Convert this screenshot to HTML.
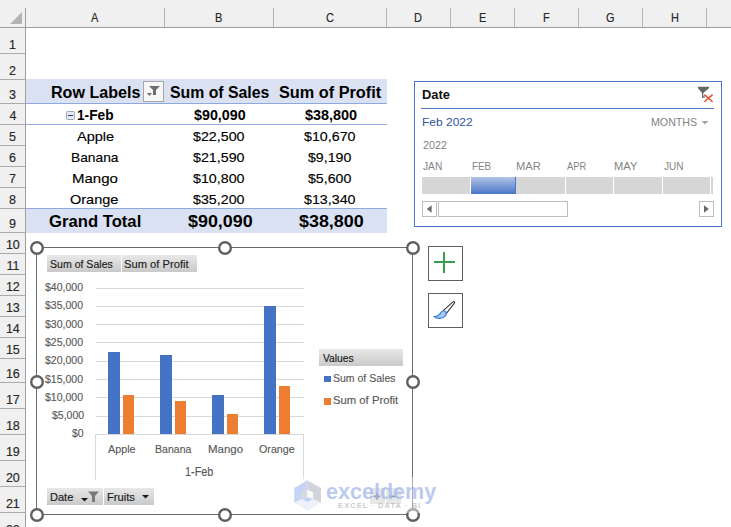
<!DOCTYPE html><html><head><meta charset="utf-8"><style>
html,body{margin:0;padding:0;}
body{width:731px;height:527px;overflow:hidden;position:relative;background:#fff;font-family:"Liberation Sans",sans-serif;}
.r{position:absolute;}
.t{position:absolute;white-space:pre;transform-origin:0 0;}
.n{-webkit-text-stroke:0.15px currentColor;}
</style></head><body>

<div class="r" style="left:0px;top:0px;width:731px;height:27px;background:#f0f0f0"></div>
<div class="r" style="left:0px;top:27px;width:731px;height:1px;background:#9e9e9e"></div>
<div class="r" style="left:164px;top:8px;width:1px;height:19px;background:#b4b4b4"></div>
<div class="r" style="left:273px;top:8px;width:1px;height:19px;background:#b4b4b4"></div>
<div class="r" style="left:386px;top:8px;width:1px;height:19px;background:#b4b4b4"></div>
<div class="r" style="left:450px;top:8px;width:1px;height:19px;background:#b4b4b4"></div>
<div class="r" style="left:514px;top:8px;width:1px;height:19px;background:#b4b4b4"></div>
<div class="r" style="left:578px;top:8px;width:1px;height:19px;background:#b4b4b4"></div>
<div class="r" style="left:642px;top:8px;width:1px;height:19px;background:#b4b4b4"></div>
<div class="r" style="left:706px;top:8px;width:1px;height:19px;background:#b4b4b4"></div>
<div class="r" style="left:0px;top:28px;width:25px;height:499px;background:#f0f0f0"></div>
<div class="r" style="left:25px;top:8px;width:1px;height:519px;background:#9e9e9e"></div>
<div class="r" style="left:0px;top:53px;width:25px;height:1px;background:#ababab"></div>
<div class="r" style="left:0px;top:79px;width:25px;height:1px;background:#ababab"></div>
<div class="r" style="left:0px;top:103px;width:25px;height:1px;background:#ababab"></div>
<div class="r" style="left:0px;top:124px;width:25px;height:1px;background:#ababab"></div>
<div class="r" style="left:0px;top:145px;width:25px;height:1px;background:#ababab"></div>
<div class="r" style="left:0px;top:166px;width:25px;height:1px;background:#ababab"></div>
<div class="r" style="left:0px;top:187px;width:25px;height:1px;background:#ababab"></div>
<div class="r" style="left:0px;top:208px;width:25px;height:1px;background:#ababab"></div>
<div class="r" style="left:0px;top:232px;width:25px;height:1px;background:#ababab"></div>
<div class="r" style="left:0px;top:253px;width:25px;height:1px;background:#ababab"></div>
<div class="r" style="left:0px;top:274px;width:25px;height:1px;background:#ababab"></div>
<div class="r" style="left:0px;top:295px;width:25px;height:1px;background:#ababab"></div>
<div class="r" style="left:0px;top:316px;width:25px;height:1px;background:#ababab"></div>
<div class="r" style="left:0px;top:337px;width:25px;height:1px;background:#ababab"></div>
<div class="r" style="left:0px;top:358px;width:25px;height:1px;background:#ababab"></div>
<div class="r" style="left:0px;top:382px;width:25px;height:1px;background:#ababab"></div>
<div class="r" style="left:0px;top:408px;width:25px;height:1px;background:#ababab"></div>
<div class="r" style="left:0px;top:434px;width:25px;height:1px;background:#ababab"></div>
<div class="r" style="left:0px;top:460px;width:25px;height:1px;background:#ababab"></div>
<div class="r" style="left:0px;top:486px;width:25px;height:1px;background:#ababab"></div>
<div class="r" style="left:0px;top:512px;width:25px;height:1px;background:#ababab"></div>
<svg class="r" style="left:0;top:0" width="25" height="27"><polygon points="22,12 22,24 10,24" fill="#b4b4b4"/></svg>
<div class="r" style="left:26px;top:79px;width:361px;height:24px;background:#d9e1f2"></div>
<div class="r" style="left:26px;top:103px;width:361px;height:1px;background:#8ea9db"></div>
<div class="r" style="left:26px;top:124px;width:361px;height:1px;background:#8ea9db"></div>
<div class="r" style="left:26px;top:208px;width:361px;height:1px;background:#8ea9db"></div>
<div class="r" style="left:26px;top:209px;width:361px;height:24px;background:#d9e1f2"></div>
<div class="r" style="left:143px;top:81px;width:19px;height:19px;border:1px solid #a6a6a6;background:#f7f7f7"></div>
<svg class="r" style="left:143px;top:81px" width="21" height="21"><polygon points="6,5 17,5 13,9 13,14 10,14 10,9" fill="#6d6d6d"/><polygon points="4,12 9,12 6.5,15" fill="#6d6d6d"/></svg>
<div class="r" style="left:66px;top:111px;width:7px;height:7px;border:1px solid #97a5c6;border-radius:1.5px;background:#e9e9ec"></div>
<div class="r" style="left:68px;top:115px;width:5px;height:1px;background:#2d3c7c"></div>
<div class="r" style="left:414px;top:81px;width:306px;height:144px;border:1px solid #4a78c8;background:#fff"></div>
<div class="r" style="left:421px;top:108px;width:293px;height:1px;background:#4a78c8"></div>
<svg class="r" style="left:696px;top:85px" width="20" height="20"><polygon points="2,1.8 13,1.8 13,3.2 7.3,8 7.3,11.6 8.9,11.6 8.9,12.8 6,12.8 6,8 2,3.2" fill="#666"/><path d="M8.4,9.6 L16.6,16.8 M16.6,9.6 L8.4,16.8" stroke="#d8502c" stroke-width="1.4"/></svg>
<svg class="r" style="left:700px;top:119px" width="12" height="8"><polygon points="1.5,2 8.5,2 5,5.5" fill="#a6a6a6"/></svg>
<div class="r" style="left:422px;top:177px;width:48px;height:17px;background:#d6d6d6"></div>
<div class="r" style="left:471px;top:177px;width:45px;height:17px;background:linear-gradient(#b0c4e7,#4a76c8);box-shadow:inset -1px 0 #4a76c8"></div>
<div class="r" style="left:516px;top:177px;width:49px;height:17px;background:#d6d6d6"></div>
<div class="r" style="left:566px;top:177px;width:47px;height:17px;background:#d6d6d6"></div>
<div class="r" style="left:614px;top:177px;width:48px;height:17px;background:#d6d6d6"></div>
<div class="r" style="left:663px;top:177px;width:47px;height:17px;background:#d6d6d6"></div>
<div class="r" style="left:711px;top:177px;width:2px;height:17px;background:#d6d6d6"></div>
<div class="r" style="left:422px;top:201px;width:13px;height:14px;border:1px solid #bdbdbd;background:#fff"></div>
<svg class="r" style="left:422px;top:201px" width="16" height="16"><polygon points="4.8,8 9.6,4.2 9.6,11.8" fill="#6a6a6a"/></svg>
<div class="r" style="left:438px;top:201px;width:128px;height:14px;border:1px solid #bdbdbd;background:#fff"></div>
<div class="r" style="left:699px;top:201px;width:13px;height:14px;border:1px solid #bdbdbd;background:#fff"></div>
<svg class="r" style="left:699px;top:201px" width="16" height="16"><polygon points="9.8,8 5,4.2 5,11.8" fill="#6a6a6a"/></svg>
<div class="r" style="left:36px;top:247px;width:377px;height:1px;background:#6b6b6b"></div>
<div class="r" style="left:36px;top:514px;width:377px;height:1px;background:#6b6b6b"></div>
<div class="r" style="left:36px;top:247px;width:1px;height:268px;background:#6b6b6b"></div>
<div class="r" style="left:412px;top:247px;width:1px;height:268px;background:#6b6b6b"></div>
<div class="r" style="left:47px;top:255px;width:74px;height:17px;background:linear-gradient(#e8e8e8,#c9c9c9)"></div>
<div class="r" style="left:122px;top:255px;width:75px;height:17px;background:linear-gradient(#e8e8e8,#c9c9c9)"></div>
<div class="r" style="left:47px;top:488px;width:56px;height:17px;background:linear-gradient(#e8e8e8,#c9c9c9)"></div>
<div class="r" style="left:104px;top:488px;width:50px;height:17px;background:linear-gradient(#e8e8e8,#c9c9c9)"></div>
<div class="r" style="left:319px;top:349px;width:84px;height:17px;background:linear-gradient(#e8e8e8,#c9c9c9)"></div>
<svg class="r" style="left:78px;top:488px" width="25" height="17"><polygon points="3,10 10,10 6.5,13.5" fill="#1a1a1a"/><polygon points="10,3.5 21,3.5 17,8 17,14 14,14 14,8" fill="#7a7a7a"/></svg>
<svg class="r" style="left:140px;top:488px" width="12" height="17"><polygon points="2,7 9,7 5.5,10.5" fill="#1a1a1a"/></svg>
<div class="r" style="left:95.5px;top:287.7px;width:208px;height:1px;background:#d9d9d9"></div>
<div class="r" style="left:95.5px;top:305.96px;width:208px;height:1px;background:#d9d9d9"></div>
<div class="r" style="left:95.5px;top:324.22px;width:208px;height:1px;background:#d9d9d9"></div>
<div class="r" style="left:95.5px;top:342.48px;width:208px;height:1px;background:#d9d9d9"></div>
<div class="r" style="left:95.5px;top:360.74px;width:208px;height:1px;background:#d9d9d9"></div>
<div class="r" style="left:95.5px;top:379.0px;width:208px;height:1px;background:#d9d9d9"></div>
<div class="r" style="left:95.5px;top:397.26px;width:208px;height:1px;background:#d9d9d9"></div>
<div class="r" style="left:95.5px;top:415.52px;width:208px;height:1px;background:#d9d9d9"></div>
<div class="r" style="left:95px;top:434px;width:209px;height:1px;background:#d9d9d9"></div>
<div class="r" style="left:95px;top:434px;width:1px;height:46px;background:#d9d9d9"></div>
<div class="r" style="left:303px;top:434px;width:1px;height:46px;background:#d9d9d9"></div>
<div class="r" style="left:108.0px;top:352.12px;width:11.8px;height:82.18px;background:#4472c4"></div>
<div class="r" style="left:122.9px;top:395.33px;width:11.3px;height:38.97px;background:#ed7d31"></div>
<div class="r" style="left:160.07px;top:355.44px;width:11.8px;height:78.86px;background:#4472c4"></div>
<div class="r" style="left:174.97px;top:400.73px;width:11.3px;height:33.57px;background:#ed7d31"></div>
<div class="r" style="left:212.14px;top:394.85px;width:11.8px;height:39.45px;background:#4472c4"></div>
<div class="r" style="left:227.04px;top:413.85px;width:11.3px;height:20.45px;background:#ed7d31"></div>
<div class="r" style="left:264.21px;top:305.73px;width:11.8px;height:128.57px;background:#4472c4"></div>
<div class="r" style="left:279.11px;top:385.58px;width:11.3px;height:48.72px;background:#ed7d31"></div>
<div class="r" style="left:324px;top:375.5px;width:6.8px;height:6.6px;background:#4472c4"></div>
<div class="r" style="left:324px;top:398px;width:6.8px;height:6.6px;background:#ed7d31"></div>
<svg class="r" style="left:29px;top:240px" width="16" height="16"><circle cx="8" cy="8" r="5.8" fill="#fff" stroke="#5f5f5f" stroke-width="2.4"/></svg>
<svg class="r" style="left:217px;top:240px" width="16" height="16"><circle cx="8" cy="8" r="5.8" fill="#fff" stroke="#5f5f5f" stroke-width="2.4"/></svg>
<svg class="r" style="left:405px;top:240px" width="16" height="16"><circle cx="8" cy="8" r="5.8" fill="#fff" stroke="#5f5f5f" stroke-width="2.4"/></svg>
<svg class="r" style="left:29px;top:373.5px" width="16" height="16"><circle cx="8" cy="8" r="5.8" fill="#fff" stroke="#5f5f5f" stroke-width="2.4"/></svg>
<svg class="r" style="left:405px;top:373.5px" width="16" height="16"><circle cx="8" cy="8" r="5.8" fill="#fff" stroke="#5f5f5f" stroke-width="2.4"/></svg>
<svg class="r" style="left:29px;top:507px" width="16" height="16"><circle cx="8" cy="8" r="5.8" fill="#fff" stroke="#5f5f5f" stroke-width="2.4"/></svg>
<svg class="r" style="left:217px;top:507px" width="16" height="16"><circle cx="8" cy="8" r="5.8" fill="#fff" stroke="#5f5f5f" stroke-width="2.4"/></svg>
<svg class="r" style="left:405px;top:507px" width="16" height="16"><circle cx="8" cy="8" r="5.8" fill="#fff" stroke="#5f5f5f" stroke-width="2.4"/></svg>
<div class="r" style="left:428px;top:246px;width:33px;height:33px;border:1px solid #5f5f5f;background:#fff"></div>
<div class="r" style="left:434px;top:261.4px;width:21px;height:1.8px;background:#3a9f4a"></div>
<div class="r" style="left:443.4px;top:252px;width:1.8px;height:21px;background:#3a9f4a"></div>
<div class="r" style="left:428px;top:293px;width:33px;height:33px;border:1px solid #5f5f5f;background:#fff"></div>
<svg class="r" style="left:428px;top:293px" width="35" height="35"><path d="M15.2,17.6 L25,8.9 C25.8,8.2 27,8.9 26.6,9.9 L18.6,20.2 Z" fill="#fff" stroke="#3a3a3a" stroke-width="1.1" stroke-linejoin="round"/><path d="M6.2,23.6 C9.6,23.2 11.6,22 13.1,19.2 C14.4,17.3 17,17.1 18.2,19.4 C18.9,22 16.2,25.2 11.6,25.4 C9.3,25.5 7.3,24.6 6.2,23.6 Z" fill="#a6c8ef" stroke="#2c77d2" stroke-width="1.1"/></svg>
<div class="r" style="left:370px;top:488px;width:15px;height:16px;background:#d4d4d4"></div>
<div class="r" style="left:386px;top:488px;width:15px;height:16px;background:#d4d4d4"></div>
<svg class="r" style="left:370px;top:488px" width="31" height="16"><path d="M3.8,8.3 H10 M6.9,5 V11.5 M20,8.3 H26" stroke="#4a4a4a" stroke-width="1.8"/></svg>
<div class="t n" style="left:91.48px;top:12px;font-size:12.5px;line-height:12.5px;font-weight:normal;color:#262626;transform:scaleX(0.88);">A</div>
<div class="t n" style="left:215.04px;top:12px;font-size:12.5px;line-height:12.5px;font-weight:normal;color:#262626;transform:scaleX(0.88);">B</div>
<div class="t n" style="left:326.04px;top:12px;font-size:12.5px;line-height:12.5px;font-weight:normal;color:#262626;transform:scaleX(0.88);">C</div>
<div class="t n" style="left:414.1px;top:12px;font-size:12.5px;line-height:12.5px;font-weight:normal;color:#262626;transform:scaleX(0.88);">D</div>
<div class="t n" style="left:478.54px;top:12px;font-size:12.5px;line-height:12.5px;font-weight:normal;color:#262626;transform:scaleX(0.88);">E</div>
<div class="t n" style="left:542.98px;top:12px;font-size:12.5px;line-height:12.5px;font-weight:normal;color:#262626;transform:scaleX(0.88);">F</div>
<div class="t n" style="left:606.1px;top:12px;font-size:12.5px;line-height:12.5px;font-weight:normal;color:#262626;transform:scaleX(0.88);">G</div>
<div class="t n" style="left:670.54px;top:12px;font-size:12.5px;line-height:12.5px;font-weight:normal;color:#262626;transform:scaleX(0.88);">H</div>
<div class="t n" style="left:9.0px;top:38.5px;font-size:12.5px;line-height:12.5px;font-weight:normal;color:#262626;">1</div>
<div class="t n" style="left:9.0px;top:64.5px;font-size:12.5px;line-height:12.5px;font-weight:normal;color:#262626;">2</div>
<div class="t n" style="left:9.0px;top:88.5px;font-size:12.5px;line-height:12.5px;font-weight:normal;color:#262626;">3</div>
<div class="t n" style="left:9.5px;top:109.5px;font-size:12.5px;line-height:12.5px;font-weight:normal;color:#262626;">4</div>
<div class="t n" style="left:9.0px;top:130.5px;font-size:12.5px;line-height:12.5px;font-weight:normal;color:#262626;">5</div>
<div class="t n" style="left:9.0px;top:151.5px;font-size:12.5px;line-height:12.5px;font-weight:normal;color:#262626;">6</div>
<div class="t n" style="left:9.0px;top:172.5px;font-size:12.5px;line-height:12.5px;font-weight:normal;color:#262626;">7</div>
<div class="t n" style="left:9.0px;top:193.5px;font-size:12.5px;line-height:12.5px;font-weight:normal;color:#262626;">8</div>
<div class="t n" style="left:9.0px;top:217.5px;font-size:12.5px;line-height:12.5px;font-weight:normal;color:#262626;">9</div>
<div class="t n" style="left:5.9px;top:238.5px;font-size:12.5px;line-height:12.5px;font-weight:normal;color:#262626;">10</div>
<div class="t n" style="left:6.4px;top:259.5px;font-size:12.5px;line-height:12.5px;font-weight:normal;color:#262626;">11</div>
<div class="t n" style="left:5.9px;top:280.5px;font-size:12.5px;line-height:12.5px;font-weight:normal;color:#262626;">12</div>
<div class="t n" style="left:5.9px;top:301.5px;font-size:12.5px;line-height:12.5px;font-weight:normal;color:#262626;">13</div>
<div class="t n" style="left:5.9px;top:322.5px;font-size:12.5px;line-height:12.5px;font-weight:normal;color:#262626;">14</div>
<div class="t n" style="left:5.9px;top:343.5px;font-size:12.5px;line-height:12.5px;font-weight:normal;color:#262626;">15</div>
<div class="t n" style="left:5.9px;top:367.5px;font-size:12.5px;line-height:12.5px;font-weight:normal;color:#262626;">16</div>
<div class="t n" style="left:5.9px;top:393.5px;font-size:12.5px;line-height:12.5px;font-weight:normal;color:#262626;">17</div>
<div class="t n" style="left:5.9px;top:419.5px;font-size:12.5px;line-height:12.5px;font-weight:normal;color:#262626;">18</div>
<div class="t n" style="left:5.9px;top:445.5px;font-size:12.5px;line-height:12.5px;font-weight:normal;color:#262626;">19</div>
<div class="t n" style="left:5.9px;top:471.5px;font-size:12.5px;line-height:12.5px;font-weight:normal;color:#262626;">20</div>
<div class="t n" style="left:5.9px;top:497.5px;font-size:12.5px;line-height:12.5px;font-weight:normal;color:#262626;">21</div>
<div class="t n" style="left:5.9px;top:523.5px;font-size:12.5px;line-height:12.5px;font-weight:normal;color:#262626;">22</div>
<div class="t" style="left:51.09px;top:84.8px;font-size:16px;line-height:16px;font-weight:bold;color:#000;transform:scaleX(1.0057);">Row Labels</div>
<div class="t" style="left:170.01px;top:84.8px;font-size:16px;line-height:16px;font-weight:bold;color:#000;transform:scaleX(0.9879);">Sum of Sales</div>
<div class="t" style="left:279.28px;top:84.8px;font-size:16px;line-height:16px;font-weight:bold;color:#000;transform:scaleX(1.0172);">Sum of Profit</div>
<div class="t" style="left:76.82px;top:107.5px;font-size:14px;line-height:14px;font-weight:bold;color:#000;transform:scaleX(0.9778);">1-Feb</div>
<div class="t" style="left:193.5px;top:107.5px;font-size:14px;line-height:14px;font-weight:bold;color:#000;transform:scaleX(1.02);">$90,090</div>
<div class="t" style="left:304.5px;top:107.5px;font-size:14px;line-height:14px;font-weight:bold;color:#000;transform:scaleX(1.03);">$38,800</div>
<div class="t n" style="left:77.0px;top:129.8px;font-size:13.5px;line-height:13.5px;font-weight:normal;color:#000;transform:scaleX(1.0765);">Apple</div>
<div class="t n" style="left:193.4px;top:129.8px;font-size:13.7px;line-height:13.7px;font-weight:normal;color:#000;transform:scaleX(1.0408);">$22,500</div>
<div class="t n" style="left:304.4px;top:129.8px;font-size:13.7px;line-height:13.7px;font-weight:normal;color:#000;transform:scaleX(1.0408);">$10,670</div>
<div class="t n" style="left:70.98px;top:150.8px;font-size:13.5px;line-height:13.5px;font-weight:normal;color:#000;transform:scaleX(1.0196);">Banana</div>
<div class="t n" style="left:193.4px;top:150.8px;font-size:13.7px;line-height:13.7px;font-weight:normal;color:#000;transform:scaleX(1.0408);">$21,590</div>
<div class="t n" style="left:308.2px;top:150.8px;font-size:13.7px;line-height:13.7px;font-weight:normal;color:#000;transform:scaleX(1.0333);">$9,190</div>
<div class="t n" style="left:72.39px;top:171.8px;font-size:13.5px;line-height:13.5px;font-weight:normal;color:#000;transform:scaleX(1.11);">Mango</div>
<div class="t n" style="left:193.4px;top:171.8px;font-size:13.7px;line-height:13.7px;font-weight:normal;color:#000;transform:scaleX(1.0408);">$10,800</div>
<div class="t n" style="left:308.2px;top:171.8px;font-size:13.7px;line-height:13.7px;font-weight:normal;color:#000;transform:scaleX(1.0333);">$5,600</div>
<div class="t n" style="left:70.22px;top:192.8px;font-size:13.5px;line-height:13.5px;font-weight:normal;color:#000;transform:scaleX(1.075);">Orange</div>
<div class="t n" style="left:193.4px;top:192.8px;font-size:13.7px;line-height:13.7px;font-weight:normal;color:#000;transform:scaleX(1.0408);">$35,200</div>
<div class="t n" style="left:304.4px;top:192.8px;font-size:13.7px;line-height:13.7px;font-weight:normal;color:#000;transform:scaleX(1.0408);">$13,340</div>
<div class="t" style="left:49.16px;top:213.9px;font-size:16px;line-height:16px;font-weight:bold;color:#000;transform:scaleX(1.0414);">Grand Total</div>
<div class="t" style="left:187.5px;top:213px;font-size:16.5px;line-height:16.5px;font-weight:bold;color:#000;transform:scaleX(1.0847);">$90,090</div>
<div class="t" style="left:298.5px;top:213px;font-size:16.5px;line-height:16.5px;font-weight:bold;color:#000;transform:scaleX(1.0847);">$38,800</div>
<div class="t" style="left:421.92px;top:88.6px;font-size:12px;line-height:12px;font-weight:bold;color:#111;transform:scaleX(1.076);">Date</div>
<div class="t" style="left:421.81px;top:116.8px;font-size:11px;line-height:11px;font-weight:normal;color:#2f55a0;transform:scaleX(1.0911);">Feb 2022</div>
<div class="t" style="left:650.53px;top:117px;font-size:11px;line-height:11px;font-weight:normal;color:#838383;transform:scaleX(0.9674);">MONTHS</div>
<div class="t" style="left:423.3px;top:139.6px;font-size:11px;line-height:11px;font-weight:normal;color:#838383;transform:scaleX(0.975);">2022</div>
<div class="t" style="left:422.7px;top:160.9px;font-size:11px;line-height:11px;font-weight:normal;color:#838383;transform:scaleX(0.93);">JAN</div>
<div class="t" style="left:471.5px;top:160.9px;font-size:11px;line-height:11px;font-weight:normal;color:#838383;transform:scaleX(0.895);">FEB</div>
<div class="t" style="left:516.19px;top:160.9px;font-size:11px;line-height:11px;font-weight:normal;color:#838383;transform:scaleX(1.013);">MAR</div>
<div class="t" style="left:567.3px;top:160.9px;font-size:11px;line-height:11px;font-weight:normal;color:#838383;transform:scaleX(0.85);">APR</div>
<div class="t" style="left:614.39px;top:160.9px;font-size:11px;line-height:11px;font-weight:normal;color:#838383;transform:scaleX(1.0136);">MAY</div>
<div class="t" style="left:663.8px;top:160.9px;font-size:11px;line-height:11px;font-weight:normal;color:#838383;transform:scaleX(0.9143);">JUN</div>
<div class="t n" style="left:50.08px;top:258.8px;font-size:11.5px;line-height:11.5px;font-weight:normal;color:#1a1a1a;transform:scaleX(0.9179);">Sum of Sales</div>
<div class="t n" style="left:124.43px;top:258.6px;font-size:11.5px;line-height:11.5px;font-weight:normal;color:#1a1a1a;transform:scaleX(0.9723);">Sum of Profit</div>
<div class="t n" style="left:45.07px;top:282.2px;font-size:11.3px;line-height:11.3px;font-weight:normal;color:#595959;transform:scaleX(0.93);">$40,000</div>
<div class="t n" style="left:45.07px;top:300.46px;font-size:11.3px;line-height:11.3px;font-weight:normal;color:#595959;transform:scaleX(0.93);">$35,000</div>
<div class="t n" style="left:45.07px;top:318.72px;font-size:11.3px;line-height:11.3px;font-weight:normal;color:#595959;transform:scaleX(0.93);">$30,000</div>
<div class="t n" style="left:45.07px;top:336.98px;font-size:11.3px;line-height:11.3px;font-weight:normal;color:#595959;transform:scaleX(0.93);">$25,000</div>
<div class="t n" style="left:45.07px;top:355.24px;font-size:11.3px;line-height:11.3px;font-weight:normal;color:#595959;transform:scaleX(0.93);">$20,000</div>
<div class="t n" style="left:45.07px;top:373.5px;font-size:11.3px;line-height:11.3px;font-weight:normal;color:#595959;transform:scaleX(0.93);">$15,000</div>
<div class="t n" style="left:45.07px;top:391.76px;font-size:11.3px;line-height:11.3px;font-weight:normal;color:#595959;transform:scaleX(0.93);">$10,000</div>
<div class="t n" style="left:51.58px;top:410.02px;font-size:11.3px;line-height:11.3px;font-weight:normal;color:#595959;transform:scaleX(0.93);">$5,000</div>
<div class="t n" style="left:72.04px;top:428.28px;font-size:11.3px;line-height:11.3px;font-weight:normal;color:#595959;transform:scaleX(0.93);">$0</div>
<div class="t n" style="left:107.5px;top:443.1px;font-size:11.7px;line-height:11.7px;font-weight:normal;color:#595959;transform:scaleX(0.92);">Apple</div>
<div class="t n" style="left:154.7px;top:443.1px;font-size:11.7px;line-height:11.7px;font-weight:normal;color:#595959;transform:scaleX(0.9026);">Banana</div>
<div class="t n" style="left:207.62px;top:443.1px;font-size:11.7px;line-height:11.7px;font-weight:normal;color:#595959;transform:scaleX(0.9824);">Mango</div>
<div class="t n" style="left:259.3px;top:443.1px;font-size:11.7px;line-height:11.7px;font-weight:normal;color:#595959;transform:scaleX(0.9154);">Orange</div>
<div class="t n" style="left:184.8px;top:466.3px;font-size:12px;line-height:12px;font-weight:normal;color:#595959;transform:scaleX(0.9033);">1-Feb</div>
<div class="t n" style="left:322.8px;top:352.8px;font-size:11px;line-height:11px;font-weight:normal;color:#1a1a1a;transform:scaleX(0.9333);">Values</div>
<div class="t n" style="left:332.89px;top:372.7px;font-size:11.5px;line-height:11.5px;font-weight:normal;color:#595959;transform:scaleX(0.9134);">Sum of Sales</div>
<div class="t n" style="left:332.52px;top:395.1px;font-size:11.5px;line-height:11.5px;font-weight:normal;color:#595959;transform:scaleX(0.9815);">Sum of Profit</div>
<div class="t n" style="left:49.7px;top:491.8px;font-size:11px;line-height:11px;font-weight:normal;color:#1a1a1a;transform:scaleX(1.0045);">Date</div>
<div class="t n" style="left:106.68px;top:491.8px;font-size:11px;line-height:11px;font-weight:normal;color:#1a1a1a;transform:scaleX(1.0154);">Fruits</div>
<div class="r" style="left:291px;top:477px;width:150px;height:36px;background:rgba(255,255,255,0.45)"></div>
<svg class="r" style="left:290px;top:476px" width="36" height="38">
<polygon points="4.3,26.7 11.9,23.1 17.3,26 23.1,23.1 31,26.7 17.3,34.6" fill="#edf1fa"/>
<polygon points="17.3,4.3 4.3,11.9 4.3,26.7 11.9,23.1 11.9,16.6 17.3,13.7" fill="#c6d4f6"/>
<polygon points="17.3,4.3 31,11.9 31,26.7 23.1,23.1 23.1,16.6 17.3,13.7" fill="#d1d4da"/>
<polygon points="11.9,16.6 17.3,13.7 17.3,20.9 11.9,23.1" fill="#d6d9df"/>
<polygon points="17.3,13.7 23.1,16.6 23.1,23.1 17.3,20.9" fill="#f6f8fb"/>
<polygon points="11.9,23.1 17.3,20.9 23.1,23.1 17.3,26" fill="#c3d2f5"/>
</svg>
<div class="t" style="left:325.6px;top:480.5px;font-size:22px;line-height:22px;font-weight:bold;color:rgba(160,182,236,0.72);transform:scaleX(0.98)">exceldemy</div>
<div class="t" style="left:338.1px;top:501.8px;font-size:7.5px;line-height:7.5px;font-weight:bold;letter-spacing:1.06px;color:rgba(165,165,165,0.6)">EXCEL · DATA · BI</div>
</body></html>
